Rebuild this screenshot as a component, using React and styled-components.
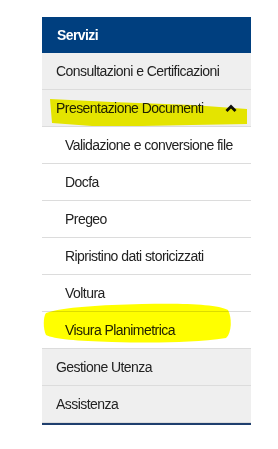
import styled, { createGlobalStyle } from 'styled-components';

const GlobalStyle = createGlobalStyle`
  body {
    margin: 0;
    background: #fff;
    font-family: Arial, "Liberation Sans", sans-serif;
  }
`;

const Page = styled.div`
  padding: 17px 0 0 42px;
`;

const Panel = styled.nav`
  position: relative;
  width: 209px;
  border-bottom: 2px solid #1f3f6e;
`;

const Header = styled.div`
  height: 36px;
  display: flex;
  align-items: center;
  padding-left: 15px;
  background: #003f7f;
  color: #fff;
  font-weight: bold;
  font-size: 14px;
  letter-spacing: -0.6px;
`;

const Item = styled.div`
  height: 36px;
  display: flex;
  align-items: center;
  justify-content: space-between;
  padding: 0 14px 0 ${(p) => (p.$sub ? 23 : 14)}px;
  background: ${(p) => (p.$sub ? '#fff' : '#efefef')};
  border-bottom: 1px solid #dcdcdc;
  color: #222;
  font-size: 14px;
  letter-spacing: -0.55px;
  white-space: nowrap;
  &:last-child {
    border-bottom: none;
  }
`;

const Highlight = styled.svg`
  position: absolute;
  left: 0;
  top: 0;
  width: 209px;
  height: 406px;
  overflow: visible;
  mix-blend-mode: multiply;
  pointer-events: none;
`;

const Chevron = () => (
  <svg width="12" height="9" viewBox="0 0 12 9">
    <polyline points="1.5,7 6,2.5 10.5,7" fill="none" stroke="#111" strokeWidth="2.8" />
  </svg>
);

const subItems = [
  'Validazione e conversione file',
  'Docfa',
  'Pregeo',
  'Ripristino dati storicizzati',
  'Voltura',
  'Visura Planimetrica',
];

export default function App() {
  return (
    <Page>
      <GlobalStyle />
      <Panel>
        <Header>Servizi</Header>
        <Item>Consultazioni e Certificazioni</Item>
        <Item>
          Presentazione Documenti
          <Chevron />
        </Item>
        {subItems.map((s) => (
          <Item key={s} $sub>{s}</Item>
        ))}
        <Item>Gestione Utenza</Item>
        <Item>Assistenza</Item>
        <Highlight viewBox="0 0 209 406">
          <path d="M8 82 L70 85 L150 88 L205 92 L205 107 L150 108 L100 109 L50 109 L10 106 Z" fill="#f4f400" />
          <path d="M4 296 C20 290 60 288 100 287 C140 286 175 287 186 293 C190 300 190 316 184 321 C150 326 110 326 70 325 C35 324 12 322 4 318 C1 312 1 300 4 296 Z" fill="#ffff00" />
        </Highlight>
      </Panel>
    </Page>
  );
}
